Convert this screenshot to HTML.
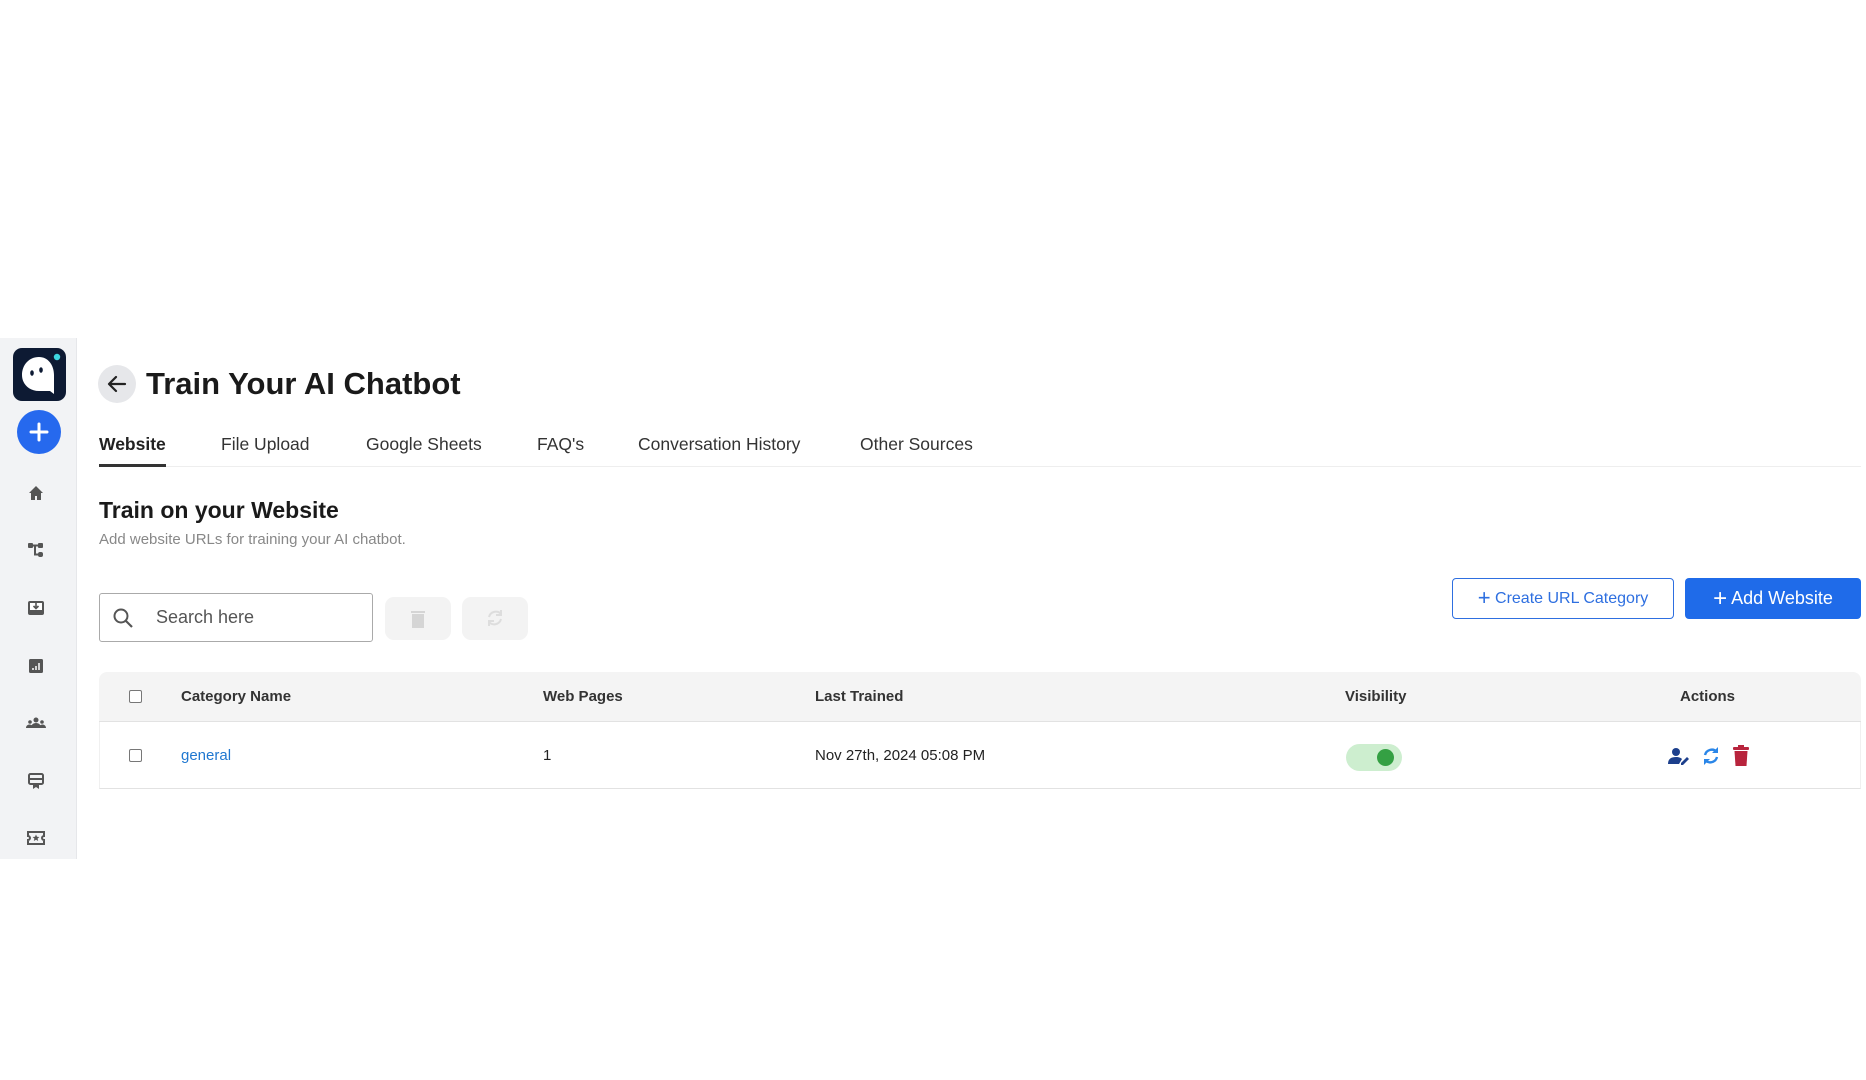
<!DOCTYPE html>
<html><head><meta charset="utf-8"><style>
*{margin:0;padding:0;box-sizing:border-box}
body{width:1866px;height:1080px;background:#fff;font-family:"Liberation Sans",sans-serif;position:relative;overflow:hidden;color:#1f1f1f}
.a{position:absolute}
.side{left:0;top:338px;width:77px;height:521px;background:#f2f3f5;border-right:1px solid #e6e7ea}
.ico{left:26px;width:20px;height:20px}
.tab{top:434px;font-size:17.5px;color:#333}
.th{top:688px;font-size:15px;font-weight:bold;color:#333}
.td{top:747px;font-size:15px;color:#222}
.cb{width:13px;height:13px;border:1.5px solid #777;border-radius:2px;background:#fff}
</style></head><body>
<div class="a side"></div>
<div class="a" style="left:13px;top:348px;width:53px;height:53px;background:#0d1a33;border-radius:9px"></div>
<svg class="a" style="left:13px;top:348px" width="53" height="53"><path d="M26 9c-10 0-17 8-17 18 0 9 7 16 17 16h11l4 3v-19c0-10-6-18-15-18z" fill="#fff"/><circle cx="44" cy="9" r="3.2" fill="#3dd6e0"/><ellipse cx="19" cy="25" rx="1.8" ry="2.8" fill="#0d1a33"/><ellipse cx="28" cy="22" rx="1.8" ry="2.8" fill="#0d1a33"/></svg>
<div class="a" style="left:17px;top:410px;width:44px;height:44px;border-radius:50%;background:#2669ee"></div>
<svg class="a" style="left:17px;top:410px" width="44" height="44"><path d="M22 14v16M14 22h16" stroke="#fff" stroke-width="3" stroke-linecap="round"/></svg>
<svg class="a ico" style="top:483px" viewBox="0 0 20 20"><path d="M3 10L10 3l7 7h-2v7h-4v-4H9v4H5v-7z" fill="#555"/></svg>
<svg class="a ico" style="top:540px" viewBox="0 0 20 20"><rect x="2" y="3" width="5" height="5" rx="1" fill="#555"/><rect x="12" y="3" width="5" height="5" rx="1" fill="#555"/><rect x="12" y="12" width="5" height="5" rx="2" fill="#555"/><path d="M7 5.5h5M9 5.5v9h3" stroke="#555" stroke-width="2" fill="none"/></svg>
<svg class="a ico" style="top:598px" viewBox="0 0 20 20"><rect x="2" y="3" width="16" height="14" rx="2" fill="#555"/><rect x="4" y="5" width="12" height="7" fill="#fff"/><path d="M10 5v5M7.5 8l2.5 2.5L12.5 8" stroke="#555" stroke-width="1.6" fill="none"/></svg>
<svg class="a ico" style="top:656px" viewBox="0 0 20 20"><rect x="3" y="3" width="14" height="14" rx="1.5" fill="#555"/><path d="M7 14v-2M10 14v-4M13 14v-7" stroke="#fff" stroke-width="1.5"/></svg>
<svg class="a ico" style="top:713px" viewBox="0 0 20 20"><circle cx="10" cy="7" r="2.5" fill="#555"/><circle cx="4" cy="9" r="1.8" fill="#555"/><circle cx="16" cy="9" r="1.8" fill="#555"/><path d="M5 15c0-3 2-5 5-5s5 2 5 5z M0 15c0-2 1.5-3.5 3.5-3.5S7 13 7 15zM13 15c0-2 1.5-3.5 3.5-3.5S20 13 20 15z" fill="#555"/></svg>
<svg class="a ico" style="top:771px" viewBox="0 0 20 20"><rect x="3" y="3" width="14" height="10" rx="1.5" fill="none" stroke="#555" stroke-width="2"/><path d="M3 8h14" stroke="#555" stroke-width="2"/><path d="M7 13v5l3-2 3 2v-5" fill="#555"/></svg>
<svg class="a ico" style="top:828px" viewBox="0 0 20 20"><path d="M2 4h16v4a2 2 0 0 0 0 4v4H2v-4a2 2 0 0 0 0-4z" fill="none" stroke="#555" stroke-width="2"/><path d="M10 6.5l1 2.3 2.4.2-1.8 1.6.6 2.4-2.2-1.3-2.2 1.3.6-2.4-1.8-1.6 2.4-.2z" fill="#555"/></svg>

<div class="a" style="left:98px;top:365px;width:38px;height:38px;border-radius:50%;background:#e6e7ea"></div>
<svg class="a" style="left:98px;top:365px" width="38" height="38"><path d="M27 19H12M18 12l-7 7 7 7" stroke="#222" stroke-width="2.2" fill="none" stroke-linecap="round" stroke-linejoin="round"/></svg>
<div class="a" style="left:146px;top:366px;font-size:31px;font-weight:bold;color:#1a1a1a">Train Your AI Chatbot</div>

<div class="a tab" style="left:99px;font-weight:bold;color:#222">Website</div>
<div class="a tab" style="left:221px">File Upload</div>
<div class="a tab" style="left:366px">Google Sheets</div>
<div class="a tab" style="left:537px">FAQ's</div>
<div class="a tab" style="left:638px">Conversation History</div>
<div class="a tab" style="left:860px">Other Sources</div>
<div class="a" style="left:99px;top:466px;width:1762px;height:1px;background:#eee"></div>
<div class="a" style="left:99px;top:464px;width:67px;height:3px;background:#333"></div>

<div class="a" style="left:99px;top:497px;font-size:23px;font-weight:bold;color:#1a1a1a">Train on your Website</div>
<div class="a" style="left:99px;top:531px;font-size:15px;color:#888">Add website URLs for training your AI chatbot.</div>

<div class="a" style="left:99px;top:593px;width:274px;height:49px;border:1.5px solid #aaa;border-radius:3px"></div>
<svg class="a" style="left:112px;top:607px" width="22" height="22"><circle cx="9" cy="9" r="6.5" stroke="#555" stroke-width="2" fill="none"/><path d="M14 14l6 6" stroke="#555" stroke-width="2.2"/></svg>
<div class="a" style="left:156px;top:607px;font-size:18px;color:#555">Search here</div>
<div class="a" style="left:385px;top:597px;width:66px;height:43px;border-radius:9px;background:#f3f3f3"></div>
<svg class="a" style="left:410px;top:609px" width="16" height="20"><rect x="1" y="2" width="14" height="2" fill="#d5d5d5"/><rect x="2" y="5" width="12" height="14" fill="#d5d5d5"/></svg>
<div class="a" style="left:462px;top:597px;width:66px;height:43px;border-radius:9px;background:#f3f3f3"></div>
<svg class="a" style="left:484px;top:607px" width="22" height="22"><path d="M17 7a7 7 0 0 0-12 3M5 15a7 7 0 0 0 12-3" stroke="#ddd" stroke-width="2" fill="none"/><path d="M17 3v5h-5M5 19v-5h5" stroke="#ddd" stroke-width="2" fill="none"/></svg>

<div class="a" style="left:1452px;top:578px;width:222px;height:41px;border:1.5px solid #2e6fe0;border-radius:4px;color:#2e6fe0;font-size:16px;text-align:center;line-height:38px"><span style="font-size:22px;vertical-align:-2px">+</span> Create URL Category</div>
<div class="a" style="left:1685px;top:578px;width:176px;height:41px;background:#1f6be9;border-radius:4px;color:#fff;font-size:18px;text-align:center;line-height:41px"><span style="font-size:24px;vertical-align:-2px">+</span> Add Website</div>

<div class="a" style="left:99px;top:672px;width:1762px;height:50px;background:#f4f4f4;border-radius:8px 8px 0 0;border-bottom:1px solid #e2e2e2"></div>
<div class="a" style="left:99px;top:722px;width:1762px;height:67px;border-bottom:1px solid #e2e2e2;border-left:1px solid #f0f0f0;border-right:1px solid #f0f0f0"></div>
<div class="a cb" style="left:129px;top:690px"></div>
<div class="a th" style="left:181px">Category Name</div>
<div class="a th" style="left:543px">Web Pages</div>
<div class="a th" style="left:815px">Last Trained</div>
<div class="a th" style="left:1345px">Visibility</div>
<div class="a th" style="left:1680px">Actions</div>
<div class="a cb" style="left:129px;top:749px"></div>
<div class="a td" style="left:181px;color:#1f77d0">general</div>
<div class="a td" style="left:543px">1</div>
<div class="a td" style="left:815px">Nov 27th, 2024 05:08 PM</div>
<div class="a" style="left:1346px;top:744px;width:56px;height:27px;border-radius:14px;background:#cdeecf"></div>
<div class="a" style="left:1377px;top:749px;width:17px;height:17px;border-radius:50%;background:#34a043"></div>
<svg class="a" style="left:1668px;top:747px" width="22" height="18"><circle cx="8" cy="5" r="4" fill="#1c3f8c"/><path d="M0 17c0-5 3-7 8-7 3 0 5 1 6 2l-3 5z" fill="#1c3f8c"/><path d="M13 16l6-6 2 2-6 6h-2z" fill="#1c3f8c"/></svg>
<svg class="a" style="left:1701px;top:745px" width="20" height="22"><path d="M16 7a7 7 0 0 0-12 3M4 15a7 7 0 0 0 12-3" stroke="#2a86e8" stroke-width="2.4" fill="none"/><path d="M17 2v6h-6M3 20v-6h6" fill="#2a86e8"/></svg>
<svg class="a" style="left:1733px;top:745px" width="16" height="21"><rect x="0" y="2" width="16" height="3" rx="1" fill="#b8243d"/><rect x="5" y="0" width="6" height="3" fill="#b8243d"/><path d="M1.5 6h13l-1 15h-11z" fill="#b8243d"/></svg>
</body></html>
